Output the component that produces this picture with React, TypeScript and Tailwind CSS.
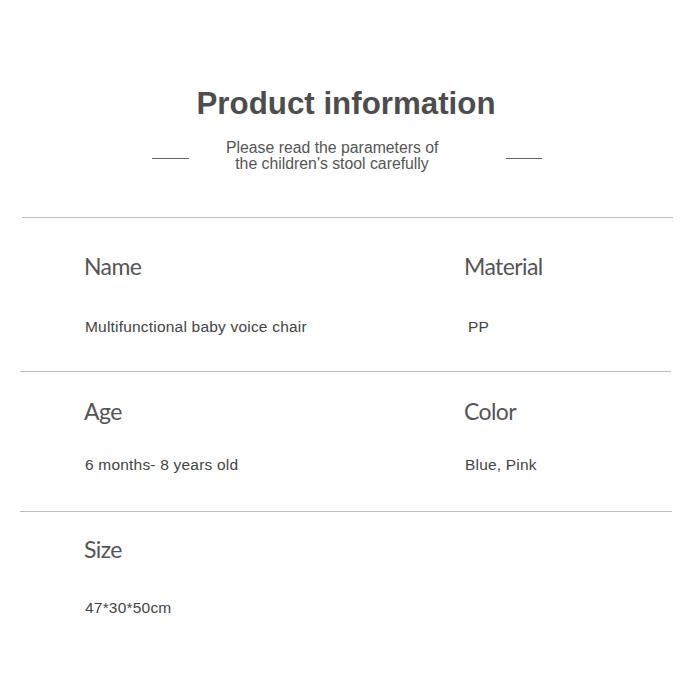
const rows = [
  {
    left: { label: "Name", value: "Multifunctional baby voice chair" },
    right: { label: "Material", value: "PP", indent: "ml-[4px]" },
    line: "mt-[45px] ml-[22px] mr-[19px]",
    top: "mt-[36px]",
    mid: "mt-[41px]",
  },
  {
    left: { label: "Age", value: "6 months- 8 years old" },
    right: { label: "Color", value: "Blue, Pink", indent: "ml-[1px]" },
    line: "mt-[36px] ml-[20px] mr-[21px]",
    top: "mt-[27px]",
    mid: "mt-[34px]",
  },
  {
    left: { label: "Size", value: "47*30*50cm" },
    right: null,
    line: "mt-[38px] ml-[20px] mr-[20px]",
    top: "mt-[25px]",
    mid: "mt-[39px]",
  },
];

const headingFont = "font-['Lato','Open_Sans',sans-serif]";
const bodyFont = "font-['Liberation_Sans',Arial,sans-serif]";

export default function App() {
  return (
    <div className={`w-[692px] h-[692px] bg-white overflow-hidden ${bodyFont}`}>
      <h1 className="mt-[88px] text-center text-[31.3px] leading-none font-bold text-[#4d4d4d]">
        Product information
      </h1>

      <div className="mt-[21px] flex items-start pl-[152px]">
        <div className="mt-[18px] w-[37px] h-px bg-[#666]" />
        <p className="ml-[37px] w-[212px] text-center text-[15.8px] leading-[16px] text-[#555] whitespace-nowrap">
          Please read the parameters of
          <br />
          the children's stool carefully
        </p>
        <div className="ml-[68px] mt-[18px] w-[36px] h-px bg-[#666]" />
      </div>

      {rows.map((row, i) => (
        <div key={i}>
          <div className={`h-px bg-[#bdbdbd] ${row.line}`} />
          <div className={`${row.top} grid grid-cols-[380px_1fr] pl-[84px]`}>
            <div>
              <div className={`${headingFont} text-[23px] tracking-[-0.6px] leading-[24px] text-[#555]`}>
                {row.left.label}
              </div>
              <div className={`${row.mid} ml-px text-[15.5px] tracking-[0.2px] leading-[16px] text-[#444]`}>
                {row.left.value}
              </div>
            </div>
            {row.right && (
              <div>
                <div className={`${headingFont} text-[23px] tracking-[-0.6px] leading-[24px] text-[#555]`}>
                  {row.right.label}
                </div>
                <div className={`${row.mid} ${row.right.indent} text-[15.5px] tracking-[0.2px] leading-[16px] text-[#444]`}>
                  {row.right.value}
                </div>
              </div>
            )}
          </div>
        </div>
      ))}
    </div>
  );
}
